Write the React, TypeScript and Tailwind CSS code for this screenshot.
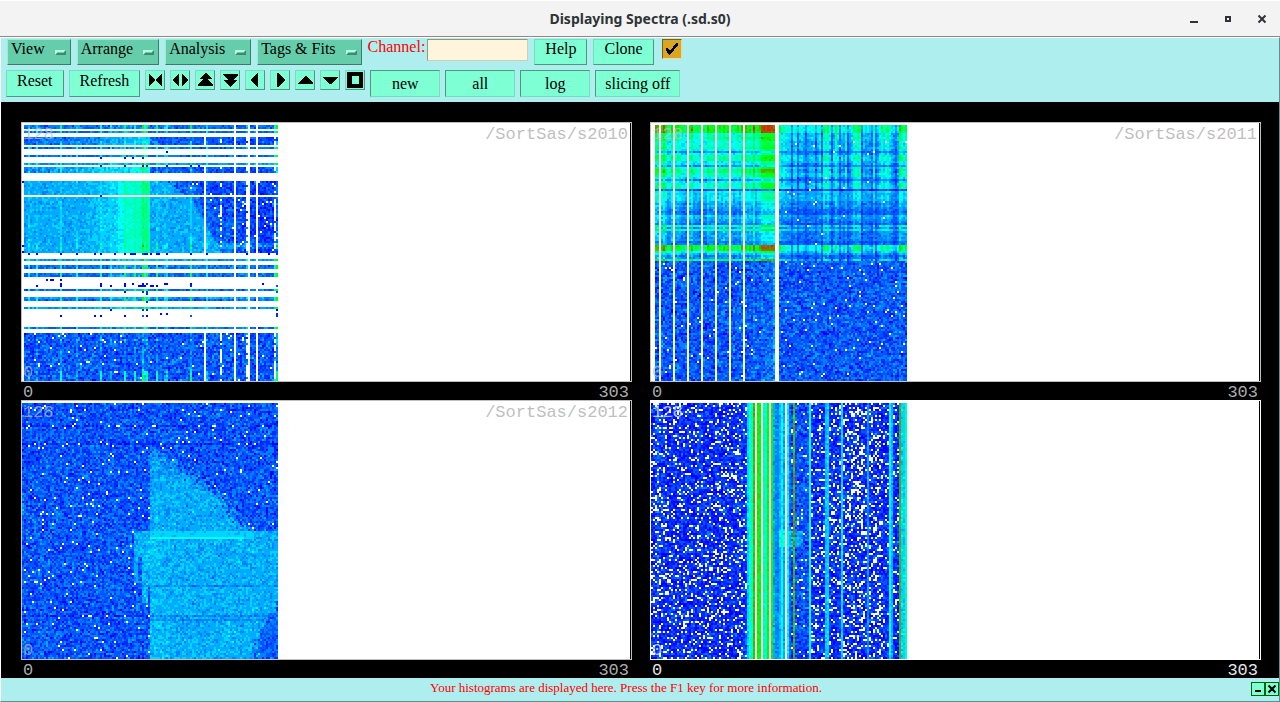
import { useMemo, type ReactNode } from "react";
import clsx from "clsx";

const COLORS = [
  "#ffffff", "#0000ff", "#002aff", "#0055ff", "#0080ff", "#00aaff", "#00d5ff",
  "#00ffff", "#00ffd5", "#00ffaa", "#00ff80", "#00ff55", "#00ff2a", "#00ff00",
  "#2ad500", "#55aa00", "#808000", "#aa5500", "#d52a00", "#ff0000",
];
const SIZE = 128;

type Random = () => number;
// colour level of one channel; 0 is empty
type Spectrum = (col: number, row: number, random: Random) => number;

function createRandom(seed: number): Random {
  let s = seed;
  return () => {
    s = (s + 0x6d2b79f5) | 0;
    let t = Math.imul(s ^ (s >>> 15), 1 | s);
    t = (t + Math.imul(t ^ (t >>> 7), 61 | t)) ^ t;
    return ((t ^ (t >>> 14)) >>> 0) / 4294967296;
  };
}

const noise = (random: Random, spread: number) => (random() + random() + random() - 1.5) * spread;
const within = (n: number, from: number, to: number) => n >= from && n <= to;

// linear interpolation through [position, value] points
function ramp(points: [number, number][], at: number) {
  for (let i = 1; i < points.length; i++) {
    const [x0, y0] = points[i - 1];
    const [x1, y1] = points[i];
    if (at <= x1) return y0 + ((y1 - y0) * (at - x0)) / (x1 - x0);
  }
  return points[points.length - 1][1];
}

const background = (random: Random, mean = 3.1, empty = 0.03) =>
  random() < empty ? 0 : Math.max(1, mean + noise(random, 1.9));

// ---- s2010 ----
const PEAKS: Record<number, number> = {
  3: 3, 7: 3, 19: 6, 27: 3, 39: 5, 44: 2, 51: 6, 56: 5, 60: 9, 61: 3, 62: 7,
  67: 6, 71: 2, 72: 3, 84: 8, 92: 3, 112: 2, 126: 5, 127: 9,
};
const THIN_ROWS = [0, 1, 3, 11, 15, 19, 67, 70, 71, 74, 75, 82, 86, 87, 91, 101];
const DOT_ROWS: Record<number, number[]> = {
  13: [72],
  16: [39, 51, 55, 60],
  20: [39, 51, 60, 62, 72, 84, 88],
  35: [39],
  64: [3, 7, 19, 27, 36, 39, 46, 51, 54, 55, 56, 60, 61, 62, 64, 67, 68, 72, 84, 92, 112, 123, 127],
  77: [12, 14, 15, 19],
  79: [19, 39, 51, 55, 60, 62, 71, 72, 84, 120],
  80: [7, 19, 39, 44, 51, 58, 59, 60, 61, 64, 65, 67, 84, 127],
  83: [51, 60, 62, 127],
  84: [62],
  88: [62],
  92: [44, 60, 62, 127],
  94: [69, 72, 127],
  95: [19, 36, 39, 51, 60, 62, 84, 127],
};

const s2010: Spectrum = (col, row, random) => {
  if (col === 0) return row === 28 || row === 60 || row === 63 ? 1 : 0;
  const peak = PEAKS[col] ?? 0;
  const gap = [91, 106, 113, 117].includes(col);
  const partGap = col === 99 || col === 112 || col === 126;

  if (THIN_ROWS.includes(row)) {
    if (col === 106 || col === 113 || col === 117) return 0;
    const base = row === 19 || row === 67 || row === 86 || row === 91 ? 4.6 : 3.6;
    return base + (within(col, 44, 63) ? 0.8 : 0) + peak * 0.95 + noise(random, 1.2);
  }
  if (DOT_ROWS[row]) return DOT_ROWS[row].includes(col) ? 1 + (peak > 6 ? random() * 2 : 0) : 0;
  if (row >= 104) {
    if (gap || (partGap && random() < 0.7)) return 0;
    const boost = row >= 123 || row === 107 ? peak * 0.85 : col === 60 ? 2.4 : peak * 0.15;
    return background(random, 3.05, 0.015) + boost;
  }
  if (within(row, 6, 9) || within(row, 21, 23)) {
    if (gap || (partGap && random() < 0.5)) return 0;
    const base = ramp([[0, 3.2], [30, 4.2], [56, 5.6], [63, 6], [64, 3.2], [127, 2.7]], col);
    return base + (row > 20 && col < 64 ? 1 : 0) + (row > 7 ? peak * 0.35 : 0) + noise(random, 1.4);
  }
  if (within(row, 28, 34) || within(row, 36, 63)) {
    if (gap || (partGap && random() < 0.65)) return 0;
    const edge = ramp([[28, 72], [34, 80], [36, 84], [63, 99]], row);
    let base = ramp([[0, 5], [30, 5.1], [40, 5.6], [47, 5.9], [48, 7], [50, 7], [51, 8], [57, 8.2], [59, 8.6], [60, 9], [63, 9], [64, 5]], col);
    if (col > edge) base = ramp([[edge, 3.6], [edge + 16, 2.7], [127, 2.3]], col);
    if (col > edge + 4 && random() < 0.03) return 0;
    const boost = within(row, 59, 61) ? Math.max(0, peak - (base - 5)) * (row === 60 ? 1 : 0.5) : peak * 0.14;
    return base + boost + noise(random, col > edge ? 1.8 : 1);
  }
  return 0;
};

// ---- s2011 ----
const ROW_LEVELS = [
  12.6, 13, 13, 12.5, 8.3, 8.6, 9.4, 8.9, 7.6, 7.8, 8, 8.7, 7.6, 4.6, 7, 9, 9.4, 9.2, 6.8, 7.2, 4.6, 8.8,
  10.4, 10.2, 8.6, 8.8, 7, 4.4, 7, 8.4, 8.6, 8.8, 3, 6.8, 6.2, 6.6, 6.6, 6.4, 5.4, 5, 5.6, 4.8, 4.4,
  3.8, 4, 6, 5.6, 5, 4.6, 4, 8.6, 5.2, 8.8, 5, 4.8, 5, 4.6, 5, 3.8, 4, 12.5, 12.5, 12, 8.2, 5.6, 4, 4.4, 10.5,
];
const COLUMN_OFFSETS = (() => {
  const random = createRandom(77);
  return Array.from({ length: SIZE }, (_, col) => {
    const jitter = (random() - 0.5) * 2;
    if (col < 4) return 1.8;
    if (col === 6 || col === 51) return 3.2;
    if (within(col, 55, 61)) return 3.4;
    if (col < 62) return jitter * 1.7;
    if (col === 124) return 2.4;
    if ([70, 73, 77, 82, 85, 90, 94, 98, 105, 110, 112, 122].includes(col)) return -4.8;
    if ([64, 86, 88, 92, 101, 103, 104, 115, 118, 125, 127].includes(col)) return 0.4;
    return jitter * 1.6 - 2.2;
  });
})();

const s2011: Spectrum = (col, row, random) => {
  if (col < 2 || col === 62 || col === 63) return 0;
  if (col < 50 && (col - 4) % 7 === 0) return 0;
  if (row >= ROW_LEVELS.length) {
    const lift = col === 61 ? 1.8 : col === 51 || col === 124 ? 0.9 : within(col, 55, 60) ? 0.4 : 0;
    return background(random, 3.05, 0.017) + lift;
  }
  const level = ROW_LEVELS[row];
  if (col > 63 && level < 8.9 && random() < 0.008) return 0;
  const weight = Math.min(1.3, level / 8) * (col > 63 && level < 7 ? 0.65 : 1);
  const drop = col > 63 && level > 10 ? -1.8 : 0;
  return Math.max(1, level + COLUMN_OFFSETS[col] * weight + drop + noise(random, 1.1));
};

// ---- s2012 ----
const s2012: Spectrum = (col, row, random) => {
  const bright = (mean: number) => mean + noise(random, 1.25);
  if (row < 64) {
    const edge = ramp([[0, 0], [23, 63], [24, 67], [28, 73], [36, 85], [45, 96], [51, 102], [60, 109], [63, 112]], row);
    if (row > 23 && col >= 64 && col < edge + noise(random, 6)) {
      return bright((col === 67 ? 5.5 : 5) - (row < 36 ? 0.4 : 0));
    }
  } else {
    const left = row < 90 ? 56 : row < 100 ? 60 : 64;
    const hole = (within(row, 77, 88) && within(col, 58, 59)) || (within(row, 92, 100) && col === 63);
    const right = ramp([[64, 140], [97, 130], [103, 125], [112, 121], [120, 117], [127, 115]], row);
    if (col >= left && !hole && col < right + noise(random, 3)) {
      if (row === 67 && within(col, 64, 110)) return col === 67 ? 9 : 7;
      if (row <= 67 && within(col, 64, 115)) return 6 - (random() < 0.08 ? 1 : 0);
      if (row === 91 || row === 106 || row === 108) return bright(4.1);
      return bright(ramp([[56, 5], [64, 5.5], [69, 5.4], [74, 5.1]], col));
    }
    if (row > 95 && col > 110) return bright(3.2);
  }
  if (row === 11 || row === 20 || row === 106) return background(random, 2, 0.08);
  return background(random, 3, 0.021);
};

// ---- s2013 ----
const LINES: Record<number, number> = {
  48: 6, 49: 8, 50: 8.8, 51: 14.7, 52: 0, 53: 13.4, 54: 13.2, 55: 0, 56: 9.2, 57: 8, 58: 13,
  59: 0, 60: 13, 61: 5, 62: 4.2, 63: 4, 64: 5.2, 65: 7, 66: 5, 67: 0, 68: 6.6, 69: 3.4, 71: 15,
  79: 8, 87: 5.6, 88: 6, 95: 6.2, 108: 4.6, 119: 7, 120: 5.2, 124: 15, 125: 6, 126: 5.8, 127: 8.4,
};

const s2013: Spectrum = (col, row, random) => {
  const line = LINES[col];
  const lift = within(row, 64, 71) && within(col, 64, 75) ? 2 : 0;
  if (line === 0) return 0;
  if (line) return line + (line < 12 ? lift : 0) + noise(random, col === 71 ? 2 : 0.9);
  if (lift) return 5 + noise(random, 1.5);
  const empty = within(col, 61, 78) ? 0.05 : col > 114 ? 0.13 : col > 95 ? 0.25 : 0.18;
  const mean = within(col, 61, 78) ? 2.8 : col === 3 ? 3 : 2;
  return background(random, mean, empty);
};

function HeatMap({ spectrum, seed }: { spectrum: Spectrum; seed: number }) {
  const paths = useMemo(() => {
    const random = createRandom(seed);
    const result = COLORS.map(() => "");
    for (let row = 0; row < SIZE; row++) {
      for (let col = 0; col < SIZE; col++) {
        const level = Math.round(spectrum(col, row, random));
        if (level > 0) result[Math.min(level, COLORS.length - 1)] += `M${col} ${row}h1v1h-1z`;
      }
    }
    return result;
  }, [spectrum, seed]);

  return (
    <svg viewBox="0 0 128 128" width="256" height="256" shapeRendering="crispEdges" className="block" aria-hidden="true">
      {paths.map((d, level) => d && <path key={level} d={d} fill={COLORS[level]} />)}
    </svg>
  );
}

type PlotProps = { name?: string; spectrum: Spectrum; seed: number; active?: boolean };

function Plot({ name, spectrum, seed, active = false }: PlotProps) {
  const label = active ? "text-white" : "text-[#bfbfbf]";
  return (
    <figure className={clsx("font-['Liberation_Mono',monospace] text-[17px]", label)}>
      <div className={clsx("border", active ? "border-white" : "border-[#bfbfbf]")}>
        <div className="relative border-r border-black bg-white pt-[2px]">
          <HeatMap spectrum={spectrum} seed={seed} />
          <span className="absolute left-px top-[2px] leading-5 opacity-70">128</span>
          <span className="absolute bottom-0 left-px leading-4 opacity-70">0</span>
          {name && <span className="absolute right-[2px] top-[2px] leading-5">{name}</span>}
        </div>
      </div>
      <figcaption className="flex h-[18px] justify-between pl-[2px] pr-[3px] leading-[22px] opacity-90">
        <span>0</span>
        <span>303</span>
      </figcaption>
    </figure>
  );
}

const RAISED = "border border-t-[#6fe0bb] border-l-[#6fe0bb] border-b-[#4c9980] border-r-[#4c9980] bg-[#7fffd4]";

function MenuButton({ children }: { children: ReactNode }) {
  return (
    <button
      type="button"
      aria-haspopup="menu"
      className="flex h-[26px] gap-[10px] border border-b-[#3d7b66] border-l-[#a3e8d0] border-r-[#3d7b66] border-t-[#a3e8d0] bg-[#66cdaa] pl-[3px] pr-1 leading-[18px]"
    >
      {children}
      <span className="mt-[10px] h-[5px] w-[11px] border-2 border-b-[#3d8a70] border-l-[#b5fbe4] border-r-[#3d8a70] border-t-[#b5fbe4] bg-[#66cdaa]" />
    </button>
  );
}

function PushButton({ children }: { children: ReactNode }) {
  return (
    <button type="button" className={clsx(RAISED, "flex px-[10px]")}>
      {children}
    </button>
  );
}

function ModeButton({ children }: { children: ReactNode }) {
  return (
    <button
      type="button"
      className="h-[27px] min-w-[70px] border border-b-[#6fe0bb] border-l-[#4c9980] border-r-[#6fe0bb] border-t-[#4c9980] bg-[#7fffd4] px-[9px] leading-6"
    >
      {children}
    </button>
  );
}

const ARROWS = [
  { label: "Compress", d: "M4 3l6 7-6 7zM17 3l-6 7 6 7z" },
  { label: "Expand", d: "M9 3v14L2 10zM12 3v14l6-7z" },
  { label: "Page up", d: "M10 3h1l6 6h-4l5 6v1H3v-1l5-6H4z" },
  { label: "Page down", d: "M3 4h15v1l-5 5h4l-6 7h-1l-6-7h4L3 5z" },
  { label: "Left", d: "M13 3v14h-1L5 10l7-7z" },
  { label: "Right", d: "M7 3v14h1l7-7-7-7z" },
  { label: "Up", d: "M3 14v-1l7-7h1l7 7v1z" },
  { label: "Down", d: "M3 7h15v1l-7 6h-1L3 8z" },
  { label: "Full range", d: "M2 2h16v16H2zM7 6v8h7V6z" },
];

function Toolbar() {
  return (
    <div className="flex flex-col gap-[5px] pb-[5px] pt-px">
      <div className="flex h-[26px] gap-[6px] pl-[6px] leading-[18px]">
        <MenuButton>View</MenuButton>
        <MenuButton>Arrange</MenuButton>
        <MenuButton>Analysis</MenuButton>
        <MenuButton>Tags &amp; Fits</MenuButton>
        <div className="flex items-start gap-[2px]">
          <label htmlFor="channel" className="leading-4 text-[#ff0000]">Channel:</label>
          <input
            id="channel"
            type="text"
            className="h-[22px] w-[101px] border border-b-[#d4cdb6] border-l-[#9a947f] border-r-[#d4cdb6] border-t-[#9a947f] bg-[#fff5dc] px-1 outline-none"
          />
        </div>
        <PushButton>Help</PushButton>
        <PushButton>Clone</PushButton>
        <div className="relative ml-[2px]">
          <input
            type="checkbox"
            aria-label="Active"
            defaultChecked
            className="block h-5 w-5 appearance-none border border-b-[#f0d890] border-l-[#7d5f12] border-r-[#f0d890] border-t-[#7d5f12] bg-[#daa520]"
          />
          <svg viewBox="0 0 20 20" className="pointer-events-none absolute left-0 top-0 h-5 w-5" shapeRendering="crispEdges" aria-hidden="true">
            <path d="M4 9h2l2 3 6-8h2v2L8 16H7l-3-5z" />
          </svg>
        </div>
      </div>
      <div className="flex h-[27px] gap-[5px] pl-[5px] leading-5">
        <PushButton>Reset</PushButton>
        <PushButton>Refresh</PushButton>
        {ARROWS.map(({ label, d }) => (
          <button key={label} type="button" aria-label={label} className={clsx(RAISED, "h-5 w-5")}>
            <svg viewBox="1 1 18 18" className="block h-[18px] w-[18px]" shapeRendering="crispEdges" aria-hidden="true">
              <path d={d} fillRule="evenodd" />
            </svg>
          </button>
        ))}
        <ModeButton>new</ModeButton>
        <ModeButton>all</ModeButton>
        <ModeButton>log</ModeButton>
        <ModeButton>slicing off</ModeButton>
      </div>
    </div>
  );
}

function TitleBar() {
  const control = "flex h-9 w-[34px] items-center justify-center";
  return (
    <header className="grid h-9 grid-cols-[1fr_auto_1fr] items-center border-t border-white bg-[#f3f3f3]">
      <h1 className="col-start-2 font-['Noto_Sans',sans-serif] text-sm leading-5 font-bold text-[#2e3436]">
        Displaying Spectra (.sd.s0)
      </h1>
      <div className="flex justify-end pr-px text-[#2e3436]">
        <button type="button" aria-label="Minimize" className={control}>
          <svg viewBox="0 0 10 10" className="h-[10px] w-[10px]" aria-hidden="true"><path d="M1 7h8v2H1z" fill="currentColor" /></svg>
        </button>
        <button type="button" aria-label="Maximize" className={control}>
          <svg viewBox="0 0 10 10" className="h-[10px] w-[10px]" aria-hidden="true"><path d="M2 2h6v6H2zM4 4v2h2V4z" fillRule="evenodd" fill="currentColor" /></svg>
        </button>
        <button type="button" aria-label="Close" className={control}>
          <svg viewBox="0 0 10 10" className="h-[10px] w-[10px]" aria-hidden="true"><path d="M1.5 1.5l7 7M8.500 1.5l-7 7" stroke="currentColor" strokeWidth="2" /></svg>
        </button>
      </div>
    </header>
  );
}

function StatusBar() {
  const control = "h-[14px] w-[14px] border border-[#006400] bg-[#7fffd4]";
  return (
    <footer className="grid h-[23px] grid-cols-[1fr_auto_1fr] items-start">
      <p className="col-start-2 mr-7 text-[13px] leading-5 text-[#ff0000]">
        Your histograms are displayed here. Press the F1 key for more information.
      </p>
      <div className="flex justify-end pt-1">
        <button type="button" aria-label="Hide panel" className={control}>
          <svg viewBox="0 0 12 12" className="block h-3 w-3" shapeRendering="crispEdges" aria-hidden="true"><path d="M3 7h6v2H3z" /></svg>
        </button>
        <button type="button" aria-label="Close panel" className={control}>
          <svg viewBox="0 0 12 12" className="block h-3 w-3" aria-hidden="true"><path d="M2.500 2.500l7 7M9.500 2.500l-7 7" stroke="black" strokeWidth="2" /></svg>
        </button>
      </div>
    </footer>
  );
}

export default function App() {
  return (
    <div className="font-['Liberation_Serif',serif] text-base text-black">
      <TitleBar />
      <div className="border-t border-[#8a8a82]">
        <div className="border border-b-[#5f8f8f] border-l-white border-r-[#5f8f8f] border-t-white bg-[#afeeee]">
          <Toolbar />
          <main className="grid grid-cols-2 gap-x-[18px] bg-black pl-5 pr-[18px] pt-5">
            <Plot name="/SortSas/s2010" spectrum={s2010} seed={10} />
            <Plot name="/SortSas/s2011" spectrum={s2011} seed={11} />
            <Plot name="/SortSas/s2012" spectrum={s2012} seed={12} />
            <Plot spectrum={s2013} seed={13} active />
          </main>
          <StatusBar />
        </div>
      </div>
    </div>
  );
}
